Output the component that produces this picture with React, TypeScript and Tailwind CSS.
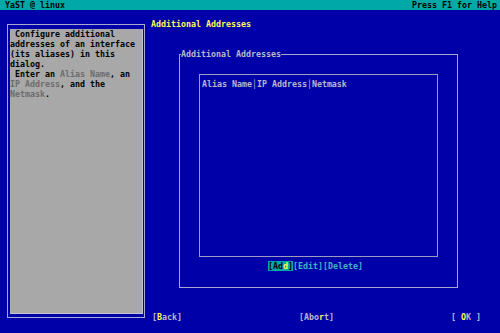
import React from 'react';

const mono = "font-['DejaVu_Sans_Mono','Liberation_Mono',monospace] text-[8.3px] leading-[10px] font-bold whitespace-pre";

const Hot: React.FC<{ children: React.ReactNode }> = ({ children }) => (
  <span className="text-[#fcfc54]">{children}</span>
);

const Dim: React.FC<{ children: React.ReactNode }> = ({ children }) => (
  <span className="text-[#6c6c6c]">{children}</span>
);

const App: React.FC = () => {
  return (
    <div className={`w-[500px] h-[333px] bg-[#0000a8] overflow-hidden flex flex-col ${mono}`}>
      {/* Top bar */}
      <div className="h-[10px] bg-[#00a8a8] text-black flex justify-between pl-[5px] pr-[3px]">
        <span>YaST @ linux</span>
        <span>Press F1 for Help</span>
      </div>

      <div className="flex flex-1">
        {/* Help panel */}
        <div className="w-[151px] pl-[7px] pt-[14px]">
          <div className="w-[138px] h-[294px] border border-[#a8a8d0] pl-[2px] pt-[4px] pr-[1px] pb-[3px]">
            <div className="h-full bg-[#a8a8a8] border-r border-b border-[#c4c4d4] text-black">
              <div>{' Configure additional'}</div>
              <div>addresses of an interface</div>
              <div>(its aliases) in this</div>
              <div>dialog.</div>
              <div>
                {' Enter an '}
                <Dim>Alias Name</Dim>, an
              </div>
              <div>
                <Dim>IP Address</Dim>, and the
              </div>
              <div>
                <Dim>Netmask</Dim>.
              </div>
            </div>
          </div>
        </div>

        {/* Main dialog */}
        <div className="flex-1 flex flex-col">
          <div className="mt-[9px] h-[10px] text-[#fcfc54]">Additional Addresses</div>

          <div className="relative ml-[28px] mt-[25px] w-[279px] h-[234px] border border-[#a8a8c8]">
            <span className="absolute -top-[6px] left-[1px] bg-[#0000a8] text-[#b8b8c8]">Additional Addresses</span>

            <div className="ml-[19px] mt-[19px] w-[239px] h-[183px] border border-[#9c9cc0] pl-[2px] pt-[4px] text-[#b8b8c8]">
              Alias Name│IP Address│Netmask
            </div>

            <div className="mt-[4px] pl-[88px] flex">
              <span className="bg-[#00a8a8] text-black">
                [Ad<span className="text-[#fcfc54]">d</span>]
              </span>
              <span className="text-[#40b4c8]">[Edit][Delete]</span>
            </div>
          </div>

          <div className="mt-[24px] flex justify-between pl-[1px] pr-[19px] text-[#b8b8c8]">
            <span>
              [<Hot>B</Hot>ack]
            </span>
            <span>
              [Abo<Hot>r</Hot>t]
            </span>
            <span>
              [ <Hot>O</Hot>K ]
            </span>
          </div>
        </div>
      </div>
    </div>
  );
};

export default App;
